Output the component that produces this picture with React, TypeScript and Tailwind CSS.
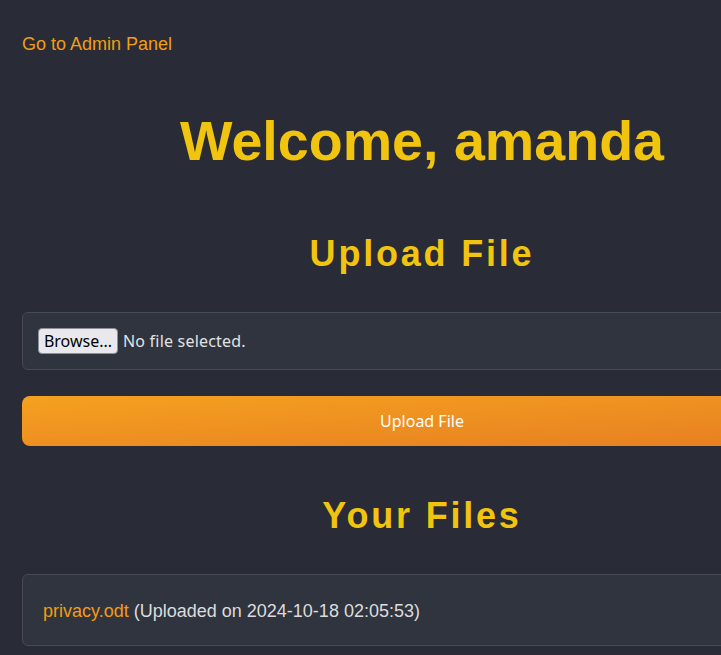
import React from 'react';

const files = [{ name: 'privacy.odt', uploaded: '2024-10-18 02:05:53' }];

export default function App() {
  return (
    <div className="min-h-screen bg-[#292c37] pl-[22px] pt-[31px] pb-10 font-['Liberation_Sans',Arial,sans-serif]">
      <div className="w-[800px]">
        <a href="#" className="block text-[18px] text-[#f39c12]">
          Go to Admin Panel
        </a>

        <h1 className="mt-[42px] text-center text-[55.6px] font-bold text-[#f1c40f]">
          Welcome, amanda
        </h1>

        <h2 className="mt-[44px] text-center text-[36px] font-bold tracking-[2.8px] text-[#f1c40f]">
          Upload File
        </h2>

        <div className="mt-[31px] flex items-center rounded-md border border-[#474a52] bg-[#30343f] p-[15px] font-['Noto_Sans',sans-serif] text-[16px]">
          <span className="flex h-[26px] w-[80px] items-center justify-center rounded-[4px] border border-[#8f8f9d] bg-[#e9e9ed] text-black">
            Browse...
          </span>
          <span className="ml-[5px] tracking-[0.2px] text-[#e2e2e2]">No file selected.</span>
        </div>

        <button className="mt-[26px] flex h-[50px] w-full items-center justify-center rounded-lg bg-linear-to-br from-[#f5a11f] to-[#e67e22] font-['Noto_Sans',sans-serif] text-[16px] text-white">
          Upload File
        </button>

        <h2 className="mt-[43px] text-center text-[36px] font-bold tracking-[2.8px] text-[#f1c40f]">
          Your Files
        </h2>

        <ul className="mt-[31px]">
          {files.map((f) => (
            <li
              key={f.name}
              className="rounded-md border border-[#474a52] bg-[#30343f] px-5 pt-[26px] pb-[24px] text-[18px] leading-[20px] text-[#dcdcdc]"
            >
              <a href="#" className="text-[#f39c12]">
                {f.name}
              </a>{' '}
              (Uploaded on {f.uploaded})
            </li>
          ))}
        </ul>
      </div>
    </div>
  );
}
